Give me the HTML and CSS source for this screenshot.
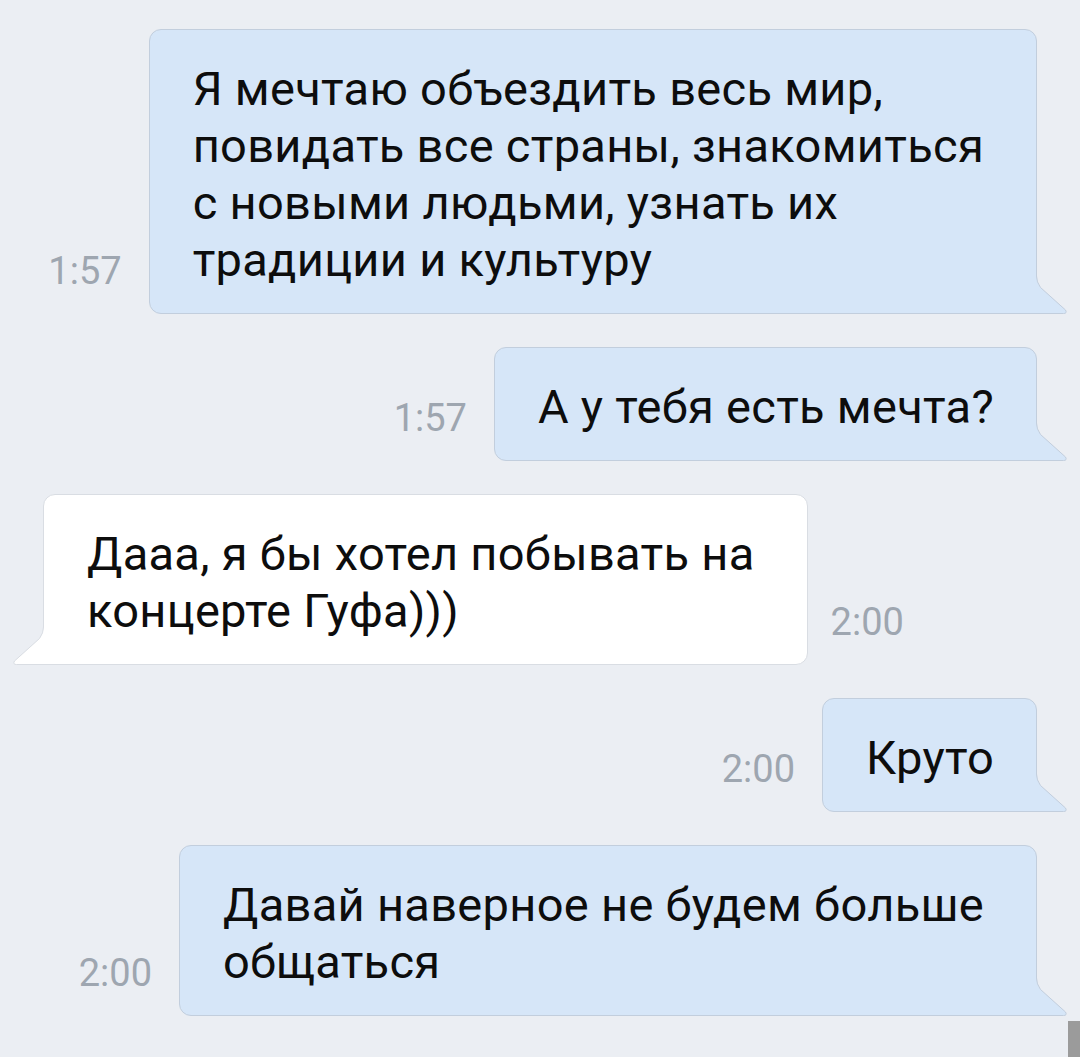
FILE: index.html
```html
<!DOCTYPE html>
<html lang="ru">
<head>
    <meta charset="UTF-8">
    <meta name="viewport" content="width=device-width, initial-scale=1.0">
    <title>Диалог</title>
    <link rel="stylesheet" href="styles.css">
</head>
<body>
    <div class="chat">
        <div class="row row-out">
            <span class="time">1:57</span>
            <div class="bubble bubble-out wrapped">
                Я мечтаю объездить весь мир,<br>
                повидать все страны, знакомиться<br>
                с новыми людьми, узнать их<br>
                традиции и культуру
                <svg class="tail" width="32" height="47" viewBox="0 0 32 47">
                    <path class="tail-fill" d="M0,0 H0.5 V9 Q0.5,15 4.5,20.5 L29.5,43 Q31.5,46.5 27.5,46.5 H0 Z"/>
                    <path class="tail-line" d="M0.5,0 V9 Q0.5,15 4.5,20.5 L29.5,43 Q31.5,46.5 27.5,46.5 H0"/>
                </svg>
            </div>
        </div>

        <div class="row row-out">
            <span class="time">1:57</span>
            <div class="bubble bubble-out">
                А у тебя есть мечта?
                <svg class="tail" width="32" height="47" viewBox="0 0 32 47">
                    <path class="tail-fill" d="M0,0 H0.5 V9 Q0.5,15 4.5,20.5 L29.5,43 Q31.5,46.5 27.5,46.5 H0 Z"/>
                    <path class="tail-line" d="M0.5,0 V9 Q0.5,15 4.5,20.5 L29.5,43 Q31.5,46.5 27.5,46.5 H0"/>
                </svg>
            </div>
        </div>

        <div class="row row-in">
            <div class="bubble bubble-in wrapped">
                Дааа, я бы хотел побывать на<br>
                концерте Гуфа)))
                <svg class="tail" width="32" height="47" viewBox="0 0 32 47">
                    <path class="tail-fill" d="M0,0 H0.5 V9 Q0.5,15 4.5,20.5 L29.5,43 Q31.5,46.5 27.5,46.5 H0 Z"/>
                    <path class="tail-line" d="M0.5,0 V9 Q0.5,15 4.5,20.5 L29.5,43 Q31.5,46.5 27.5,46.5 H0"/>
                </svg>
            </div>
            <span class="time">2:00</span>
        </div>

        <div class="row row-out">
            <span class="time">2:00</span>
            <div class="bubble bubble-out">
                Круто
                <svg class="tail" width="32" height="47" viewBox="0 0 32 47">
                    <path class="tail-fill" d="M0,0 H0.5 V9 Q0.5,15 4.5,20.5 L29.5,43 Q31.5,46.5 27.5,46.5 H0 Z"/>
                    <path class="tail-line" d="M0.5,0 V9 Q0.5,15 4.5,20.5 L29.5,43 Q31.5,46.5 27.5,46.5 H0"/>
                </svg>
            </div>
        </div>

        <div class="row row-out">
            <span class="time">2:00</span>
            <div class="bubble bubble-out wrapped">
                Давай наверное не будем больше<br>
                общаться
                <svg class="tail" width="32" height="47" viewBox="0 0 32 47">
                    <path class="tail-fill" d="M0,0 H0.5 V9 Q0.5,15 4.5,20.5 L29.5,43 Q31.5,46.5 27.5,46.5 H0 Z"/>
                    <path class="tail-line" d="M0.5,0 V9 Q0.5,15 4.5,20.5 L29.5,43 Q31.5,46.5 27.5,46.5 H0"/>
                </svg>
            </div>
        </div>
    </div>

    <div class="scroll-thumb"></div>
</body>
</html>
```

FILE: styles.css
```css
body {
    margin: 0;
    height: 1057px;
    overflow: hidden;
    background-color: #ebeef3;
    font-family: Roboto, "Noto Sans", sans-serif;
    position: relative;
}
.chat {
    display: flex;
    flex-direction: column;
    gap: 33px;
    padding: 29px 43px 0;
}
.row {
    display: flex;
    align-items: flex-end;
    gap: 27px;
}
.row-out {
    justify-content: flex-end;
}
.row-in {
    justify-content: flex-start;
    gap: 23px;
}
.time {
    font-size: 38px;
    line-height: 38px;
    font-weight: 400;
    color: #9ea6b0;
    margin-bottom: 24px;
}
.bubble {
    position: relative;
    font-size: 47px;
    letter-spacing: 0.3px;
    line-height: 57px;
    color: #0d0d0d;
    padding: 30px 42px 25px 43px;
    border-radius: 12px;
    white-space: nowrap;
}
.bubble.wrapped {
    padding-right: 52px;
}
.bubble-out {
    background-color: #d6e6f8;
    border: 1px solid #c2cedd;
    border-bottom-right-radius: 0;
}
.bubble-in {
    background-color: #ffffff;
    border: 1px solid #d9dde3;
    border-bottom-left-radius: 0;
}
.tail {
    position: absolute;
    bottom: -1px;
    display: block;
}
.bubble-out .tail {
    left: 100%;
}
.bubble-in .tail {
    right: 100%;
    transform: scaleX(-1);
}
.tail-line {
    fill: none;
    stroke-width: 1;
}
.bubble-out .tail-fill {
    fill: #d6e6f8;
}
.bubble-out .tail-line {
    stroke: #c2cedd;
}
.bubble-in .tail-fill {
    fill: #ffffff;
}
.bubble-in .tail-line {
    stroke: #d9dde3;
}
.scroll-thumb {
    position: absolute;
    right: 0;
    bottom: 0;
    width: 12px;
    height: 36px;
    background-color: #9b9b9b;
}
```
